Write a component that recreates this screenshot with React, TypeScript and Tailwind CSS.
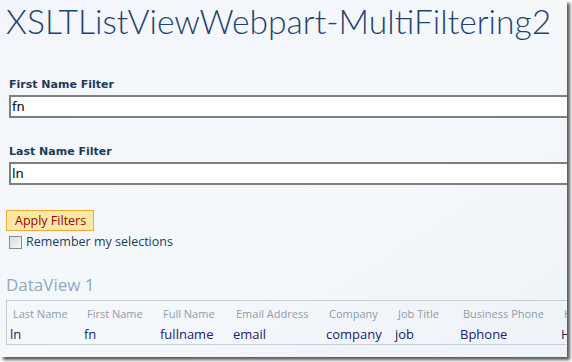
import React from "react";

const columns = [
  { head: "Last Name", value: "ln", w: "w-[74px]" },
  { head: "First Name", value: "fn", w: "w-[76px]" },
  { head: "Full Name", value: "fullname", w: "w-[73px]" },
  { head: "Email Address", value: "email", w: "w-[93px]" },
  { head: "Company", value: "company", w: "w-[69px]" },
  { head: "Job Title", value: "job", w: "w-[65px]" },
  { head: "Business Phone", value: "Bphone", w: "w-[101px]" },
  { head: "Home Phone", value: "Hphone", w: "w-[90px]" },
];

const FilterField = ({ label, value }: { label: string; value: string }) => (
  <div className="flex flex-col">
    <label className="pl-[9px] text-[11px] font-bold leading-[14px] text-[#1f3b5c] [font-family:'DejaVu_Sans',sans-serif]">
      {label}
    </label>
    <div className="ml-[9px] mt-[3px] h-[23px] border-y-2 border-l-2 border-[#7f7f7f] bg-white pl-[1px] text-[13px] leading-[19px] text-black [font-family:'DejaVu_Sans',sans-serif]">
      {value}
    </div>
  </div>
);

export default function App() {
  return (
    <div className="h-[362px] w-[572px] overflow-hidden bg-white">
      <div className="flex h-[357px] w-[567px] flex-col overflow-hidden bg-gradient-to-br from-[#f2f6fa] via-[#f5f8fb] to-[#eef3f8] shadow-[3px_3px_3px_rgba(0,0,0,0.65)]">
        <h1 className="mt-[1px] whitespace-nowrap pl-[6px] text-[33.6px] font-light leading-[40px] text-[#1f4470] [font-family:Lato,sans-serif]">
          XSLTListViewWebpart-MultiFiltering2
        </h1>

        <div className="mt-[37px] flex flex-col gap-[27px]">
          <FilterField label="First Name Filter" value="fn" />
          <FilterField label="Last Name Filter" value="ln" />
        </div>

        <div className="mt-[25px] flex flex-col pl-[6px]">
          <button className="h-[21px] w-[88px] border border-[#f4a738] bg-[#fde9a6] text-left pl-[8px] text-[12.5px] leading-[18px] text-[#a10000] [font-family:'Open_Sans',sans-serif]">
            Apply Filters
          </button>
          <div className="mt-[3px] flex items-center gap-[4px] pl-[3px]">
            <span className="h-[13px] w-[13px] border border-[#8a8a8a] bg-gradient-to-br from-[#dcdcdc] to-[#f7f7f7]" />
            <span className="text-[12.5px] leading-[16px] text-[#1f3b5c] [font-family:'Open_Sans',sans-serif]">
              Remember my selections
            </span>
          </div>
        </div>

        <div className="mt-[24px] pl-[6px] text-[17px] leading-[22px] text-[#8ea8c2] [font-family:'Open_Sans',sans-serif]">
          DataView 1
        </div>

        <div className="ml-[6px] mt-[4px] flex h-[45px] border-y border-l border-[#c3cfdb] pt-[5px] [font-family:'Open_Sans',sans-serif]">
          {columns.map((c) => (
            <div key={c.head} className={`${c.w} shrink-0 flex flex-col`}>
              <span className="whitespace-nowrap pl-[6px] text-[11px] leading-[15px] text-[#8d9cac]">
                {c.head}
              </span>
              <span className="mt-[5px] whitespace-nowrap pl-[3px] text-[13px] leading-[17px] text-[#1e2070]">
                {c.value}
              </span>
            </div>
          ))}
        </div>
      </div>
    </div>
  );
}
